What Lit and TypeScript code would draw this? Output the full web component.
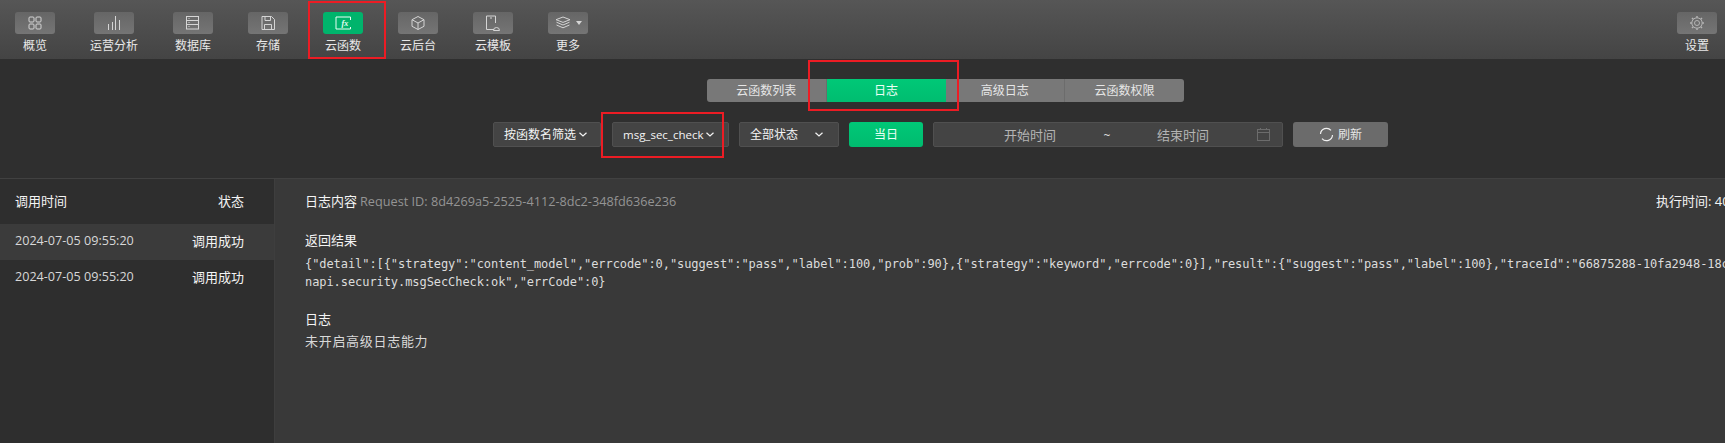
import { LitElement, html, css, svg } from "lit";
import { customElement } from "lit/decorators.js";

const s = (body: unknown, w = 18, h = 18, vb = "0 0 18 18") => html`<svg width=${w} height=${h} viewBox=${vb} fill="none" stroke="currentColor" stroke-width="1">${body}</svg>`;

const icons: Record<string, unknown> = {
  grid: s(svg`<rect x="3" y="3" width="5" height="5" rx="1"/><rect x="10" y="3" width="5" height="5" rx="1"/><rect x="3" y="10" width="5" height="5" rx="1"/><rect x="10" y="10" width="5" height="5" rx="1"/>`),
  chart: s(svg`<path d="M3.5 10v6M7.5 8v8M10.5 2v14M14.5 6v10"/>`),
  db: s(svg`<rect x="2.5" y="2.5" width="12" height="12.5"/><path d="M2.5 6.5h12M2.5 10.5h12M4.5 4.5h1M4.5 8.5h1M4.5 12.5h1"/>`),
  save: s(svg`<path d="M3 2.5h9.5l3 3V15.5H3z"/><path d="M6 2.5v4h5.5v-4M5.5 15.5v-5h7v5"/>`),
  fx: s(svg`<path d="M16.5 6V3H2v12h14.5v-2"/><text x="7.5" y="12" fill="currentColor" stroke="none" font-size="8" font-style="italic" font-family="Liberation Serif, serif" font-weight="700">fx</text>`),
  box: s(svg`<path d="M9 2.5l6 3.2v6.6l-6 3.2-6-3.2V5.7z"/><path d="M3 5.7l6 3.3 6-3.3M9 9v6.5"/>`),
  tpl: s(svg`<path d="M11 15.5H3.5V2h9v7"/><path d="M7 4h2"/><path d="M10.5 16.5a3 3 0 0 1 6 0z"/>`, 20, 18, "0 0 20 18"),
  settings: html`<span class="dim">${s(svg`<circle cx="9" cy="9" r="2.5"/><circle cx="9" cy="9" r="5.2"/><path d="M9 2v1.8M9 14.2V16M2 9h1.8M14.2 9H16M4 4l1.3 1.3M12.7 12.7L14 14M14 4l-1.3 1.3M5.3 12.7L4 14" stroke-width="1.5"/>`)}</span>`,
};
const layers = html`<span class="more"><svg width="16" height="14" viewBox="0 0 16 14" fill="none" stroke="currentColor" stroke-width="1"><path d="M8 1l7 2.7L8 6.4 1 3.7z"/><path d="M1.5 6.2L8 9l6.5-2.8M1.5 9L8 11.8 14.5 9"/></svg><svg width="6" height="4" viewBox="0 0 6 4"><path d="M0 0h6L3 4z" fill="currentColor"/></svg></span>`;
const chev = html`<svg class="chev" width="8" height="5" viewBox="0 0 8 5" fill="none" stroke="currentColor" stroke-width="1.2"><path d="M.5 .7L4 4 7.500 .7"/></svg>`;

const navL = [
  ["概览", "grid"], ["运营分析", "chart"], ["数据库", "db"], ["存储", "save"],
  ["云函数", "fx"], ["云后台", "box"], ["云模板", "tpl"], ["更多", "more"],
];
const json1 = `{"detail":[{"strategy":"content_model","errcode":0,"suggest":"pass","label":100,"prob":90},{"strategy":"keyword","errcode":0}],"result":{"suggest":"pass","label":100},"traceId":"66875288-10fa2948-18c`;
const json2 = `napi.security.msgSecCheck:ok","errCode":0}`;

@customElement("app-root")
export class AppRoot extends LitElement {
  static styles = css`
    :host { display: block; position: relative; width: 1725px; height: 443px; overflow: hidden; background: #2f2f2f; color: #e6e6e6;
      font: 12px/18px "Open Sans", "Noto Sans CJK SC", sans-serif; }
    * { box-sizing: border-box; }
    .nav { height: 59px; display: flex; gap: 35px; padding: 12px 8px 0 15px; background: linear-gradient(#565656, #444); }
    .item { display: flex; flex-direction: column; align-items: center; min-width: 40px; color: #e8e8e8; }
    .item.last { margin-left: auto; }
    .btn { width: 40px; height: 22px; border-radius: 3px; background: linear-gradient(#666, #757575); color: #d5d5d5; display: flex; align-items: center; justify-content: center; margin-bottom: 3px; }
    .dim { display: flex; color: #b4b4b4; }
    .item.on .btn { background: #00b46c; color: #eafff5; }
    .more { display: inline-flex; align-items: center; gap: 5px; }
    .label { line-height: 18px; }
    .filters { height: 120px; padding-top: 20px; border-bottom: 1px solid #414141; }
    .tabs { display: flex; width: 477px; height: 23px; margin-left: 707px; border-radius: 3px; overflow: hidden; background: #787878; color: #e6e6e6; }
    .tab { flex: 1; display: flex; align-items: center; justify-content: center; border-right: 1px solid #6c6c6c; }
    .tab:last-child { border-right: 0; }
    .tab.on { background: linear-gradient(#00c877, #00bd70); color: #ecfff6; border-right: 0; }
    .row { display: flex; height: 25px; margin: 20px 0 0 493px; }
    .sel { height: 25px; border: 1px solid #505050; background: #444; border-radius: 2px; display: flex; align-items: center; color: #f4f4f4; }
    .s1 { width: 108px; padding-left: 10px; gap: 3px; }
    .s2 { width: 117px; margin-left: 11px; padding-left: 10px; gap: 3px; font-size: 11.5px; }
    .s3 { width: 100px; margin-left: 10px; padding-left: 10px; gap: 17px; }
    .today { width: 74px; height: 25px; margin-left: 10px; border-radius: 3px; background: linear-gradient(#00c877, #00bb6f); color: #eafff5; display: flex; align-items: center; justify-content: center; }
    .date { width: 350px; margin-left: 10px; color: #b4b4b4; padding-left: 70px; }
    .date .d { width: 53px; white-space: nowrap; font-size: 13px; }
    .tilde { width: 100px; text-align: center; color: #ddd; padding-top: 3px; }
    .cal { margin-left: 47px; color: #6c6c6c; display: flex; }
    .refresh { width: 95px; height: 25px; margin-left: 10px; border-radius: 3px; background: #6b6b6b; color: #e6e6e6; display: flex; align-items: center; justify-content: center; gap: 4px; }
    .main { display: flex; height: 264px; font-size: 13px; }
    .left { width: 275px; flex: none; background: #2e2e2e; border-right: 1px solid #3e3e3e; }
    .lh, .lr { display: flex; justify-content: space-between; padding: 0 30px 2px 15px; align-items: center; }
    .lh { height: 45px; color: #f4f4f4; }
    .lr { height: 36px; color: #f4f4f4; }
    .lr.on { background: #3b3b3b; }
    .time { color: #d8d8d8; font-size: 12.6px; }
    .right { flex: 1; min-width: 0; background: #393939; padding: 0 0 0 30px; }
    .rh { height: 45px; padding-bottom: 2px; display: flex; align-items: center; color: #f4f4f4; }
    .rid { color: #949494; margin-left: 3px; font-size: 12.7px; }
    .exec { margin-left: auto; width: 69px; white-space: nowrap; overflow: hidden; flex: none; }
    .sec { padding-top: 7px; color: #f4f4f4; line-height: 18px; }
    pre { margin: 6px 0 0; font: 12px/18px "DejaVu Sans Mono", monospace; letter-spacing: -0.07px; color: #dcdcdc; white-space: pre; overflow: hidden; }
    .log { padding-top: 19px; }
    .none { margin-top: 4px; letter-spacing: .7px; color: #d8d8d8; }
    .mark { position: absolute; border: 2px solid #ec1c24; pointer-events: none; }
    .m1 { left: 308px; top: 1px; width: 78px; height: 58px; }
    .m2 { left: 808px; top: 60px; width: 151px; height: 51px; }
    .m3 { left: 601px; top: 112px; width: 123px; height: 46px; }
  `;

  render() {
    const nav = (l: string, k: string, cls = "") => html`<div class="item ${cls}"><div class="btn">${k === "more" ? layers : icons[k]}</div><div class="label">${l}</div></div>`;
    return html`
      <div class="nav">
        ${navL.map(([l, k]) => nav(l, k, l === "云函数" ? "on" : ""))}
        ${nav("设置", "settings", "last")}
      </div>
      <div class="filters">
        <div class="tabs">
          <div class="tab">云函数列表</div><div class="tab on">日志</div><div class="tab">高级日志</div><div class="tab">云函数权限</div>
        </div>
        <div class="row">
          <div class="sel s1">按函数名筛选${chev}</div>
          <div class="sel s2">msg_sec_check${chev}</div>
          <div class="sel s3">全部状态${chev}</div>
          <div class="today">当日</div>
          <div class="sel date"><span class="d">开始时间</span><span class="tilde">~</span><span class="d">结束时间</span>
            <span class="cal"><svg width="13" height="13" viewBox="0 0 13 13" fill="none" stroke="currentColor"><rect x=".5" y="1.5" width="12" height="11"/><path d="M.5 4.500h12M3.500 0v2M9.500 0v2"/></svg></span></div>
          <div class="refresh"><svg width="15" height="15" viewBox="0 0 15 15" fill="none" stroke="#f0f0f0" stroke-width="1.2"><path d="M1.500 7a6 6 0 0 1 10.500-3.600M13.500 8A6 6 0 0 1 3 11.600"/></svg>刷新</div>
        </div>
      </div>
      <div class="main">
        <div class="left">
          <div class="lh"><span>调用时间</span><span>状态</span></div>
          <div class="lr on"><span class="time">2024-07-05 09:55:20</span><span>调用成功</span></div>
          <div class="lr"><span class="time">2024-07-05 09:55:20</span><span>调用成功</span></div>
        </div>
        <div class="right">
          <div class="rh"><span>日志内容</span><span class="rid">Request ID: 8d4269a5-2525-4112-8dc2-348fd636e236</span><span class="exec">执行时间: 40ms</span></div>
          <div class="sec">返回结果</div>
          <pre>${json1}
${json2}</pre>
          <div class="sec log">日志</div>
          <div class="none">未开启高级日志能力</div>
        </div>
      </div>
      <div class="mark m1"></div><div class="mark m2"></div><div class="mark m3"></div>
    `;
  }
}
